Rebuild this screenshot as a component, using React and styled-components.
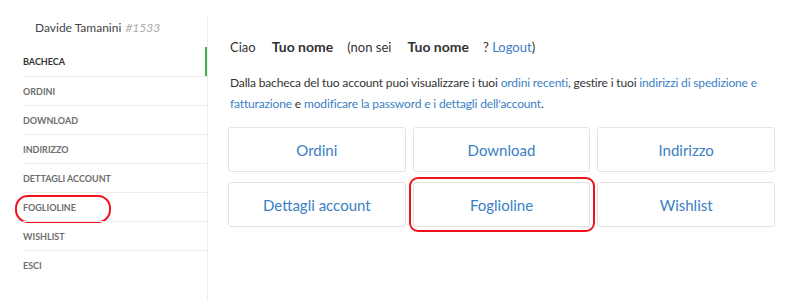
import React from 'react';
import styled, { createGlobalStyle } from 'styled-components';

const GlobalStyle = createGlobalStyle`
  html, body {
    margin: 0;
    padding: 0;
    background: #fff;
  }
  body {
    font-family: Lato, "Open Sans", sans-serif;
    color: #333;
  }
`;

const Page = styled.div`
  display: flex;
  padding: 17px 25px 0 23px;
  height: 305px;
  box-sizing: border-box;
`;

const Sidebar = styled.aside`
  width: 184px;
  flex-shrink: 0;
  border-right: 1px solid #ececec;
  height: 284px;
`;

const UserName = styled.div`
  padding: 3px 0 0 12px;
  height: 27px;
  font-size: 12px;
  color: #444;
`;

const UserId = styled.span`
  color: #aaa;
  font-style: italic;
  margin-left: 1px;
`;

const Nav = styled.ul`
  list-style: none;
  margin: 0;
  padding: 0;
`;

const NavItem = styled.li`
  position: relative;
  height: 29px;
  line-height: 29px;
  box-sizing: border-box;
  border-top: ${(p) => (p.$first ? 'none' : '1px solid #ececec')};
  font-size: 9px;
  font-weight: 700;
  letter-spacing: 0;
  text-transform: uppercase;
  color: ${(p) => (p.$active ? '#333' : '#6e6e6e')};
  box-shadow: ${(p) => (p.$active ? 'inset -2px 0 0 #3fb24b' : 'none')};
`;

const Highlight = styled.span`
  position: absolute;
  border: 2px solid #f2121b;
  pointer-events: none;
  box-sizing: border-box;
`;

const MenuRing = styled(Highlight)`
  left: -8px;
  top: 2px;
  width: 96px;
  height: 28px;
  border-radius: 13px;
`;

const Main = styled.main`
  flex: 1;
  padding-left: 20px;
`;

const Greeting = styled.p`
  margin: 12px 0 0 2px;
  font-size: 13px;
  line-height: 36px;
  height: 36px;
`;

const Bold = styled.strong`
  font-weight: 700;
  font-size: 14px;
  margin: 0 14px 0 16px;
`;

const Link = styled.a`
  color: #3a80c4;
  text-decoration: none;
`;

const Intro = styled.p`
  margin: 7px 0 0 2px;
  font-size: 12px;
  letter-spacing: -0.15px;
  line-height: 21px;
  white-space: nowrap;
`;

const Grid = styled.div`
  display: grid;
  grid-template-columns: repeat(3, 1fr);
  column-gap: 7px;
  row-gap: 10px;
  margin-top: 13px;
`;

const Card = styled.a`
  position: relative;
  display: flex;
  align-items: center;
  justify-content: center;
  height: 43px;
  border: 1px solid #e3e3e3;
  border-radius: 3px;
  color: #3a80c4;
  font-size: 15px;
  text-decoration: none;
`;

const CardRing = styled(Highlight)`
  left: -5px;
  top: -6px;
  right: -6px;
  bottom: -6px;
  border-radius: 9px;
`;

const menu = ['Bacheca', 'Ordini', 'Download', 'Indirizzo', 'Dettagli account', 'Foglioline', 'Wishlist', 'Esci'];
const cards = ['Ordini', 'Download', 'Indirizzo', 'Dettagli account', 'Foglioline', 'Wishlist'];

export default function App() {
  return (
    <>
      <GlobalStyle />
      <Page>
        <Sidebar>
          <UserName>
            Davide Tamanini <UserId>#1533</UserId>
          </UserName>
          <Nav>
            {menu.map((m, i) => (
              <NavItem key={m} $first={i === 0} $active={i === 0}>
                {m}
                {m === 'Foglioline' && <MenuRing />}
              </NavItem>
            ))}
          </Nav>
        </Sidebar>
        <Main>
          <Greeting>
            Ciao<Bold>Tuo nome</Bold>(non sei<Bold>Tuo nome</Bold>? <Link href="#">Logout</Link>)
          </Greeting>
          <Intro>
            Dalla bacheca del tuo account puoi visualizzare i tuoi <Link href="#">ordini recenti</Link>, gestire i tuoi{' '}
            <Link href="#">indirizzi di spedizione e</Link>
            <br />
            <Link href="#">fatturazione</Link> e <Link href="#">modificare la password e i dettagli dell'account</Link>.
          </Intro>
          <Grid>
            {cards.map((c) => (
              <Card key={c} href="#">
                {c}
                {c === 'Foglioline' && <CardRing />}
              </Card>
            ))}
          </Grid>
        </Main>
      </Page>
    </>
  );
}
